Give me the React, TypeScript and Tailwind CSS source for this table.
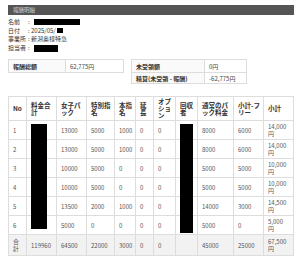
import React from "react";

const font = { fontFamily: '"Noto Sans CJK JP", "Noto Sans", sans-serif' };

const rows = [
  ["1", "", "13000", "5000", "1000", "0", "0", "", "8000", "6000", "14,000円"],
  ["2", "", "13000", "5000", "1000", "0", "0", "", "8000", "6000", "14,000円"],
  ["3", "", "10000", "5000", "0", "0", "0", "", "5000", "5000", "10,000円"],
  ["4", "", "10000", "5000", "0", "0", "0", "", "5000", "5000", "10,000円"],
  ["5", "", "13500", "2000", "1000", "0", "0", "", "14000", "3000", "14,500円"],
  ["6", "", "5000", "0", "0", "0", "0", "", "5000", "0", "5,000円"],
];
const total = ["合計", "119960", "64500", "22000", "3000", "0", "0", "", "45000", "25000", "67,500円"];
const headers = ["No", "料金合計", "女子パック", "特別指名", "本指名", "延長", "オプション", "回収者", "通常のパック料金", "小計-フリー", "小計"];
const widths = ["w-[18px]", "w-[30px]", "w-[30px]", "w-[28px]", "w-[21px]", "w-[18px]", "w-[22px]", "w-[22px]", "w-[36px]", "w-[30px]", "w-[30px]"];

function Cell({ c, idx }: { c: string; idx: number }) {
  const pr = idx === 10 ? "pr-[7px]" : idx === 0 ? "pr-[3px]" : "pr-[2px]";
  return (
    <td className={`border border-[#dddddd] pl-[4px] ${pr} py-[2px] align-middle text-[#555]`}>
      {c}
    </td>
  );
}

export default function App() {
  return (
    <div className="w-[300px] h-[256px] bg-white overflow-hidden px-[8px] pt-[5px]" style={font}>
      <div className="w-[286px] h-[10px] bg-[#555555] text-[#d0d0d0] text-[5.5px] leading-[10px] pl-[5px]">報酬明細</div>
      <div className="mt-[3px] text-[6px] leading-[8.6px] text-[#333]">
        <div className="flex items-center">
          <span className="w-[20px]">名前</span>
          <span>:</span>
          <span className="ml-[4px] w-[46px] h-[6px] bg-black"></span>
        </div>
        <div className="flex items-center">
          <span className="w-[20px]">日付</span>
          <span>: 2025/05/</span>
          <span className="ml-[1px] w-[6px] h-[5px] bg-black"></span>
        </div>
        <div className="flex items-center">
          <span className="w-[20px]">事業所</span>
          <span>: 新潟奥様特急</span>
        </div>
        <div className="flex items-center">
          <span className="w-[20px]">担当者</span>
          <span>:</span>
          <span className="ml-[4px] w-[24px] h-[7px] bg-black"></span>
        </div>
      </div>
      <div className="mt-[7px] flex items-start gap-[7px] text-[6px] leading-[7px]">
        <table className="table-fixed border-collapse w-[115px]">
          <colgroup>
            <col className="w-[57px]" />
            <col className="w-[58px]" />
          </colgroup>
          <tbody>
            <tr className="h-[13px]">
              <td className="border border-[#dddddd] bg-[#fafafa] px-[4px] font-bold text-[#333]">報酬総額</td>
              <td className="border border-[#dddddd] px-[4px] text-[#444]">62,775円</td>
            </tr>
          </tbody>
        </table>
        <table className="table-fixed border-collapse w-[115px]">
          <colgroup>
            <col className="w-[73px]" />
            <col className="w-[42px]" />
          </colgroup>
          <tbody>
            <tr className="h-[13px]">
              <td className="border border-[#dddddd] bg-[#fafafa] px-[4px] font-bold text-[#333]">未受領額</td>
              <td className="border border-[#dddddd] px-[4px] text-[#444]">0円</td>
            </tr>
            <tr className="h-[11px]">
              <td className="border border-[#dddddd] bg-[#fafafa] px-[4px] font-bold text-[#333]">精算(未受領 - 報酬)</td>
              <td className="border border-[#dddddd] px-[4px] text-[#444]">-62,775円</td>
            </tr>
          </tbody>
        </table>
      </div>
      <div className="relative mt-[12px]">
        <table className="table-fixed border-collapse w-[285px] text-[6px] leading-[7px]">
          <colgroup>
            {widths.map((w, i) => (
              <col key={i} className={w} />
            ))}
          </colgroup>
          <thead>
            <tr className="h-[23px]">
              {headers.map((h, i) => (
                <th key={i} className="border border-[#dddddd] pl-[4px] pr-[2px] py-[1px] text-left align-middle font-bold text-[6.5px] leading-[7px] text-[#333] break-all">
                  {h}
                </th>
              ))}
            </tr>
          </thead>
          <tbody>
            {rows.map((r, ri) => (
              <tr key={ri} className="h-[19px]">
                {r.map((c, ci) => (
                  <Cell key={ci} c={c} idx={ci} />
                ))}
              </tr>
            ))}
            <tr className="h-[21px] bg-[#f2f2f2]">
              {total.map((c, ci) => (
                <Cell key={ci} c={c} idx={ci} />
              ))}
            </tr>
          </tbody>
        </table>
        <div className="absolute left-[23px] top-[28px] w-[16px] h-[105px] bg-black"></div>
        <div className="absolute left-[172px] top-[28px] w-[13px] h-[109px] bg-black"></div>
      </div>
    </div>
  );
}
